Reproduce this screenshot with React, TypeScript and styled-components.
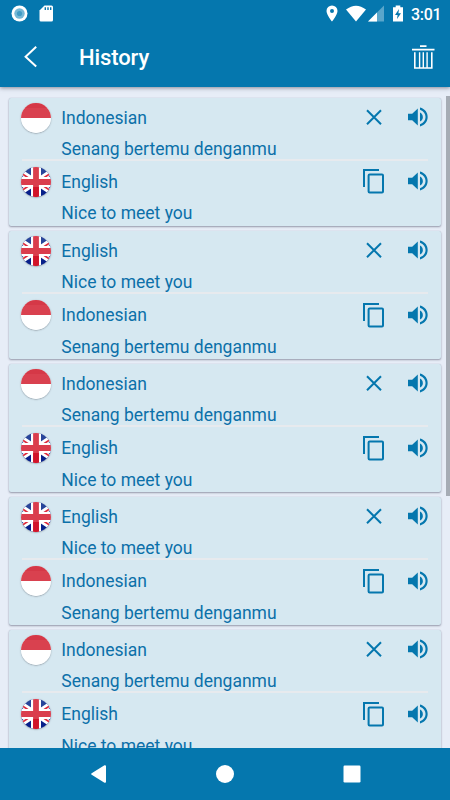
import React from 'react';
import styled, { createGlobalStyle } from 'styled-components';

const BLUE = '#0577ae';

const GlobalStyle = createGlobalStyle`
  * { box-sizing: border-box; }
  body { margin: 0; font-family: Roboto, "Liberation Sans", sans-serif; }
  svg { display: block; }
`;

const Screen = styled.div`
  display: flex;
  flex-direction: column;
  width: 450px;
  height: 800px;
  overflow: hidden;
  background: #e7edf7;
`;

const Header = styled.header`
  flex: none;
  height: 87px;
  background: ${BLUE};
  color: #fff;
  box-shadow: 0 1px 4px rgba(40, 40, 60, 0.5);
  z-index: 1;
`;

const StatusBar = styled.div`
  display: flex;
  align-items: center;
  height: 27px;
  padding: 0 9px 0 11px;
`;

const StatusIcon = styled.svg<{ $gap: number }>`
  flex: none;
  margin-right: ${(p) => p.$gap}px;
`;

const Spacer = styled.div`
  flex: 1;
`;

const Clock = styled.span`
  font-size: 16px;
  font-weight: 500;
  letter-spacing: -0.3px;
  line-height: 27px;
  width: 30px;
  margin-top: 1px;
  white-space: nowrap;
`;

const Toolbar = styled.div`
  display: flex;
  align-items: center;
  height: 60px;
  padding: 0 15px 0 23px;
`;

const Title = styled.h1`
  flex: 1;
  margin: 2px 0 0 41px;
  font-size: 22px;
  font-weight: 500;
  letter-spacing: -0.1px;
  line-height: 30px;
`;

const Content = styled.main`
  display: flex;
  flex: 1;
  min-height: 0;
  overflow: hidden;
`;

const List = styled.div`
  display: flex;
  flex-direction: column;
  gap: 5px;
  width: 446px;
  padding: 11.1px 5px 0 9px;
`;

const Card = styled.article`
  flex: none;
  height: 128.1px;
  border-radius: 2px;
  background: #d6e8f1;
  box-shadow: 0 1px 2px rgba(40, 40, 70, 0.42), 0 0 1px rgba(40, 40, 70, 0.2);
`;

const Entry = styled.section`
  height: 61px;
  padding: 0 12.5px 0 12px;
  color: #0c70a9;
  font-size: 17.5px;
`;

const EntryHead = styled.div`
  display: flex;
  align-items: center;
  height: 39px;
`;

const Language = styled.span`
  flex: 1;
  margin: 0 0 0 10.3px;
  line-height: 24px;
`;

const Phrase = styled.p`
  margin: 0 0 0 40.3px;
  line-height: 24px;
`;

const Divider = styled.div`
  height: 2px;
  margin: 0 13px 1.4px;
  background: #e7eaee;
`;

const ActionButton = styled.button<{ $gap?: number }>`
  display: block;
  flex: none;
  margin: -1px ${(p) => p.$gap ?? 0}px 0 0;
  padding: 0;
  border: 0;
  background: none;
  color: ${BLUE};
`;

const ScrollThumb = styled.div`
  flex: none;
  width: 4px;
  height: 400px;
  margin-top: 9px;
  background: #a6acb5;
`;

const NavBar = styled.nav`
  display: flex;
  flex: none;
  align-items: center;
  justify-content: space-between;
  height: 52px;
  padding: 0 89.5px 0 89px;
  background: ${BLUE};
  color: #fff;
`;

type Lang = 'Indonesian' | 'English';

const phrases: Record<Lang, string> = {
  Indonesian: 'Senang bertemu denganmu',
  English: 'Nice to meet you',
};

const history: [Lang, Lang][] = [
  ['Indonesian', 'English'],
  ['English', 'Indonesian'],
  ['Indonesian', 'English'],
  ['English', 'Indonesian'],
  ['Indonesian', 'English'],
];

const FlagIcon = styled.svg`
  flex: none;
  border-radius: 50%;
  box-shadow: 0 0.5px 1.5px rgba(50, 50, 60, 0.5);
`;

function Flag({ lang }: { lang: Lang }) {
  return lang === 'Indonesian' ? (
    <FlagIcon width="30" height="30" viewBox="0 0 30 30">
      <path d="M0 0H30V30H0Z" fill="#fff" />
      <path d="M0 0H30V15H0Z" fill="#d9414f" />
      <path d="M0 0H30V5H0Z" fill="#d22f40" opacity=".5" />
    </FlagIcon>
  ) : (
    <FlagIcon width="30" height="30" viewBox="0 0 30 30">
      <path d="M0 0H30V15H0Z" fill="#28459a" />
      <path d="M0 15H30V30H0Z" fill="#07208a" />
      <path d="M-3 3L33 27M-3 27L33 3" stroke="#fff" strokeWidth="5.6" />
      <path d="M-3 4L15 16M15 14L33 26M-3 26L15 14M15 16L33 4" stroke="#dc2a3c" strokeWidth="1.8" />
      <path d="M15 0V30M0 15H30" stroke="#fff" strokeWidth="10" />
      <path d="M15 0V30M0 15H30" stroke="#da3d4d" strokeWidth="5.8" />
      <path d="M15 20V30" stroke="#d1142a" strokeWidth="5.8" />
    </FlagIcon>
  );
}

function CloseIcon() {
  return (
    <svg width="24" height="24" viewBox="0 0 24 24" fill="none" stroke="currentColor" strokeWidth="2">
      <path d="M5 5.2L19 19.2M19 5.2L5 19.2" />
    </svg>
  );
}

function CopyIcon() {
  return (
    <svg width="24" height="26" viewBox="0 0 24 26" fill="none" stroke="currentColor" strokeWidth="2">
      <path d="M2 19V2H17" />
      <rect x="6.6" y="6.5" width="14.4" height="18" rx="1" />
    </svg>
  );
}

function SpeakerIcon() {
  return (
    <svg width="22" height="22" viewBox="0 0 22 22" fill="currentColor">
      <path d="M1 7.8H5.2L10.8 2.4V19.6L5.2 14.2H1Z" />
      <path d="M13 6.4C16.8 8.2 16.8 13.8 13 15.6Z" />
      <path d="M13 1.6C23.2 4 23.2 18 13 20.4V18.2C20.4 15.8 20.4 6.2 13 3.8Z" />
    </svg>
  );
}

function HistoryEntry({ lang, copy }: { lang: Lang; copy?: boolean }) {
  return (
    <Entry>
      <EntryHead>
        <Flag lang={lang} />
        <Language>{lang}</Language>
        <ActionButton $gap={21} aria-label={copy ? 'Copy' : 'Remove'}>
          {copy ? <CopyIcon /> : <CloseIcon />}
        </ActionButton>
        <ActionButton aria-label="Listen">
          <SpeakerIcon />
        </ActionButton>
      </EntryHead>
      <Phrase>{phrases[lang]}</Phrase>
    </Entry>
  );
}

export default function App() {
  return (
    <>
      <GlobalStyle />
      <Screen>
        <Header>
          <StatusBar>
            <StatusIcon $gap={11} width="17" height="17" viewBox="0 0 17 17">
              <circle cx="8.5" cy="8.5" r="8" fill="#fff" />
              <circle cx="8.5" cy="8.5" r="5.2" fill="#75b8d6" />
              <circle cx="8.5" cy="8.5" r="2.6" fill="#409bc5" />
            </StatusIcon>
            <StatusIcon $gap={0} width="15" height="17" viewBox="0 0 15 17">
              <path d="M5.5.5H12.5Q14 .5 14 2V15Q14 16.5 12.5 16.5H2Q.5 16.5 .5 15V5.5Z" fill="#fff" />
              <path d="M6.3 2.3V5M9 2.3V5M11.7 2.3V5" stroke={BLUE} strokeWidth="1.4" />
            </StatusIcon>
            <Spacer />
            <StatusIcon $gap={8} width="12" height="17" viewBox="0 0 12 17">
              <path
                d="M6 .5A5.5 5.5 0 0 0 .5 6C.5 10 6 16.5 6 16.5S11.5 10 11.5 6A5.5 5.5 0 0 0 6 .5ZM6 4A2 2 0 1 1 6 8A2 2 0 0 1 6 4Z"
                fill="#fff"
              />
            </StatusIcon>
            <StatusIcon $gap={1} width="20" height="17" viewBox="0 0 20 17">
              <path d="M0 4.5Q10-3.2 20 4.5L10 16.5Z" fill="#fff" />
            </StatusIcon>
            <StatusIcon $gap={8} width="17" height="17" viewBox="0 0 17 17">
              <path d="M17 .5V16.5H1Z" fill="#59a6cb" />
              <path d="M10 7.5V16.5H1Z" fill="#fff" />
            </StatusIcon>
            <StatusIcon $gap={7} width="12" height="17" viewBox="0 0 12 17">
              <path d="M3.7 .5H8.3V2.2H11V16.5H1V2.2H3.7Z" fill="#fff" />
              <path d="M7 4L3 10H5.6L5 14L9 8.2H6.4Z" fill={BLUE} />
            </StatusIcon>
            <Clock>3:01</Clock>
          </StatusBar>
          <Toolbar>
            <svg width="15" height="24" viewBox="0 0 15 24" fill="none" stroke="#fff" strokeWidth="2">
              <path d="M13.2 1.8L2.6 11.7L13.2 21.6" />
            </svg>
            <Title>History</Title>
            <svg width="24" height="26" viewBox="0 0 24 26" fill="none" stroke="#fff" strokeWidth="1.4">
              <path d="M9 2.2H15.5M1 5.6H23.5" strokeWidth="1.7" />
              <path d="M3.8 8.2V24H20.8V8.2" strokeWidth="1.6" />
              <path d="M8.6 8.2V24M12.3 8.2V24M16.1 8.2V24" />
            </svg>
          </Toolbar>
        </Header>
        <Content>
          <List>
            {history.map(([from, to], i) => (
              <Card key={i}>
                <HistoryEntry lang={from} />
                <Divider />
                <HistoryEntry lang={to} copy />
              </Card>
            ))}
          </List>
          <ScrollThumb />
        </Content>
        <NavBar>
          <svg width="18" height="20" viewBox="0 0 18 20">
            <path d="M16 2.2L3.2 10L16 17.8Z" fill="#fff" stroke="#fff" strokeWidth="2" strokeLinejoin="round" />
          </svg>
          <svg width="18" height="18" viewBox="0 0 18 18">
            <circle cx="9" cy="9" r="9" fill="#fff" />
          </svg>
          <svg width="18" height="18" viewBox="0 0 18 18">
            <rect x=".5" y=".5" width="17" height="17" rx="1.2" fill="#fff" />
          </svg>
        </NavBar>
      </Screen>
    </>
  );
}
